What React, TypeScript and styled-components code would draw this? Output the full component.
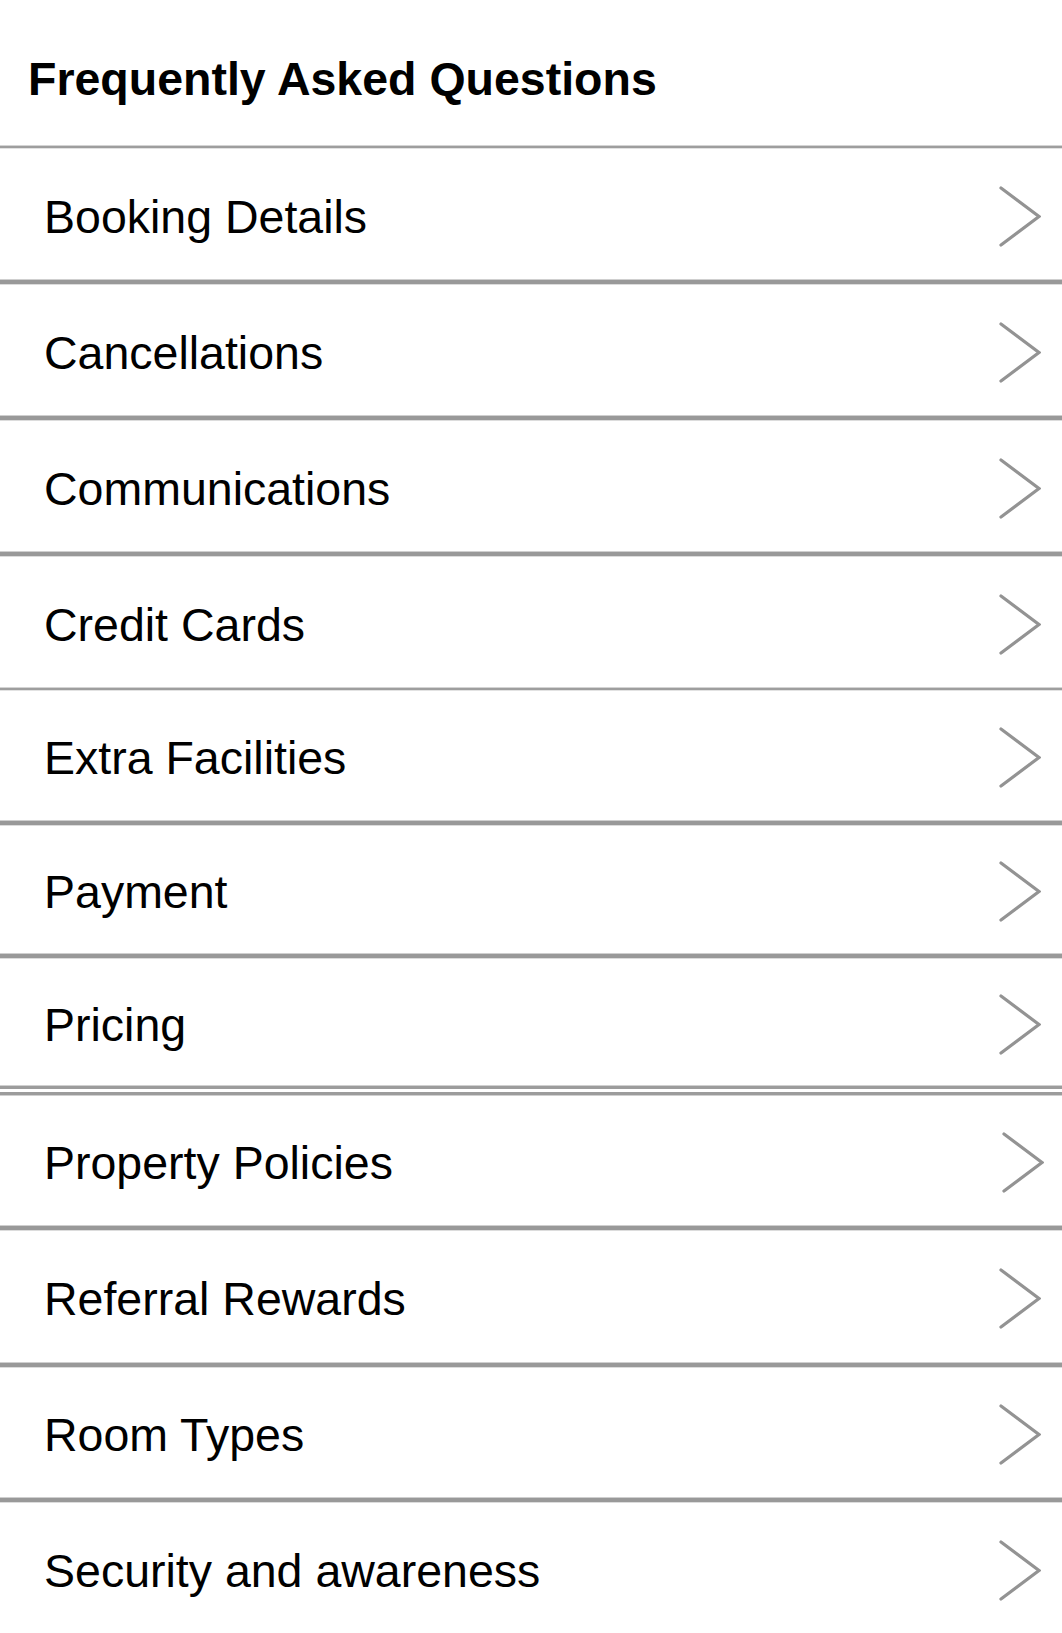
import React from "react";
import styled, { createGlobalStyle, css } from "styled-components";

const GlobalStyle = createGlobalStyle`
  html, body {
    margin: 0;
    padding: 0;
    background: #ffffff;
  }
  body {
    font-family: "Liberation Sans", Arial, Helvetica, sans-serif;
    color: #000;
  }
`;

type SepKind = "thin" | "thick" | "double";

const Page = styled.div`
  width: 1062px;
  display: flex;
  flex-direction: column;
  background: #fff;
`;

const Header = styled.header`
  box-sizing: border-box;
  height: 145px;
  padding: 56px 0 0 28px;
  font-size: 46.5px;
  line-height: 1;
  font-weight: 700;
  color: #000;
`;

const Separator = styled.div<{ $kind: SepKind }>`
  box-sizing: border-box;
  width: 100%;
  ${({ $kind }) =>
    $kind === "thin"
      ? css`
          height: 4px;
          border-top: 1px solid #d4d4d4;
          border-bottom: 1px solid #e2e2e2;
          background: #9e9e9e;
        `
      : $kind === "thick"
      ? css`
          height: 6px;
          border-top: 1px solid #cfcfcf;
          border-bottom: 1px solid #dcdcdc;
          background: #999999;
        `
      : css`
          height: 11px;
          border-top: 1px solid #d0d0d0;
          border-bottom: 1px solid #d0d0d0;
          background: linear-gradient(
            to bottom,
            #9c9c9c 0,
            #9c9c9c 3px,
            #ffffff 3px,
            #ffffff 6px,
            #9c9c9c 6px,
            #9c9c9c 9px
          );
        `}
`;

const Row = styled.div<{ $h: number; $shift?: number }>`
  box-sizing: border-box;
  height: ${({ $h }) => $h}px;
  display: flex;
  align-items: center;
  justify-content: space-between;
  padding: 6px ${({ $shift }) => 21 - ($shift || 0)}px 0 44px;
  background: #fff;
`;

const Label = styled.span`
  font-size: 46.5px;
  line-height: 1;
  font-weight: 400;
  color: #000;
  white-space: nowrap;
`;

const Chevron = styled.svg`
  width: 42px;
  height: 61px;
  flex: none;
  margin-top: -2px;
`;

const ChevronIcon = () => (
  <Chevron viewBox="0 0 42 61" aria-hidden="true">
    <polyline
      points="2,2 40,30.5 2,59"
      fill="none"
      stroke="#939393"
      strokeWidth="3.2"
      strokeLinecap="round"
      strokeLinejoin="miter"
    />
  </Chevron>
);

const items: { label: string; h: number; sep: SepKind; shift?: number }[] = [
  { label: "Booking Details", h: 130, sep: "thick" },
  { label: "Cancellations", h: 130, sep: "thick" },
  { label: "Communications", h: 130, sep: "thick" },
  { label: "Credit Cards", h: 130, sep: "thin" },
  { label: "Extra Facilities", h: 129, sep: "thick" },
  { label: "Payment", h: 127, sep: "thick" },
  { label: "Pricing", h: 126, sep: "double" },
  { label: "Property Policies", h: 129, sep: "thick", shift: 3 },
  { label: "Referral Rewards", h: 131, sep: "thick" },
  { label: "Room Types", h: 129, sep: "thick" },
  { label: "Security and awareness", h: 130, sep: "thick" },
];

export default function App() {
  return (
    <>
      <GlobalStyle />
      <Page>
        <Header>Frequently Asked Questions</Header>
        <Separator $kind="thin" />
        {items.map((it, i) => (
          <React.Fragment key={it.label}>
            <Row $h={it.h} $shift={it.shift}>
              <Label>{it.label}</Label>
              <ChevronIcon />
            </Row>
            {i < items.length - 1 && <Separator $kind={it.sep} />}
          </React.Fragment>
        ))}
      </Page>
    </>
  );
}
